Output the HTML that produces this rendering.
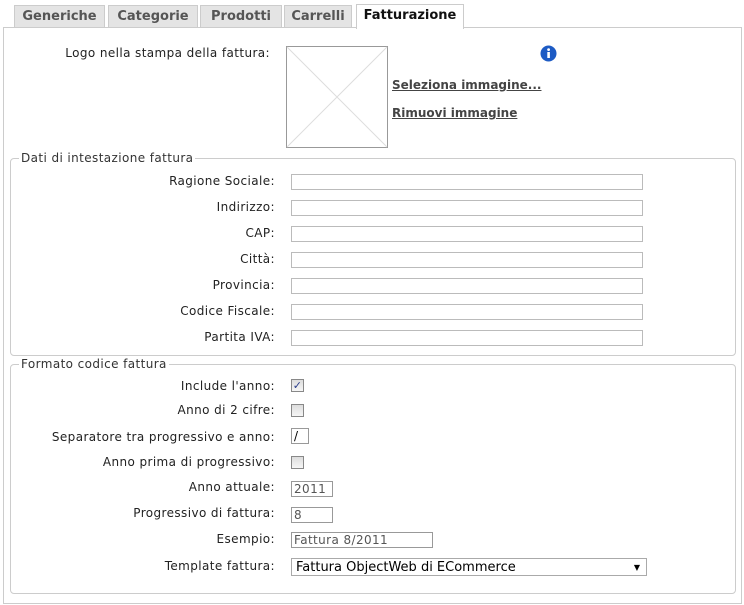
<!DOCTYPE html><html><head><style>
body{margin:0;width:744px;height:605px;background:#fff;font-family:"DejaVu Sans","Liberation Sans",sans-serif;font-size:12px;letter-spacing:0.4px;color:#222;position:relative;overflow:hidden}
.a{position:absolute}
.tab{position:absolute;top:5px;height:21px;background:#e4e4e4;border:1px solid #ccc;border-bottom:none;font-weight:bold;color:#555;font-size:13px;letter-spacing:0;text-align:center;line-height:22px}
.lbl{position:absolute;right:469px;white-space:nowrap}
.in{position:absolute;left:291px;width:350px;height:14px;border:1px solid #bbb;background:#fff}
.fs{position:absolute;border:1px solid #ccc;border-radius:4px;left:10px;width:724px}
.lg{position:absolute;left:8px;top:-8px;background:#fff;padding:0 2px;color:#333}
.cb{position:absolute;left:291px;width:11px;height:11px;border:1px solid #888;background:linear-gradient(#ddd,#f6f6f6)}
.t{position:absolute;left:291px;border:1px solid #999;height:14px;line-height:14px;padding-left:2px;color:#555;font-size:12px}
</style></head><body>
<div class="a" style="left:3px;top:27px;width:737px;height:575px;border:1px solid #ccc"></div>
<div class="tab" style="left:14px;width:89px">Generiche</div>
<div class="tab" style="left:108px;width:88px">Categorie</div>
<div class="tab" style="left:200px;width:80px">Prodotti</div>
<div class="tab" style="left:284px;width:66px">Carrelli</div>
<div class="tab" style="left:356px;width:106px;top:4px;height:24px;background:#fff;color:#111">Fatturazione</div>
<div class="lbl" style="top:46px;right:474px">Logo nella stampa della fattura:</div>
<svg class="a" style="left:286px;top:46px" width="102" height="102"><rect x=".5" y=".5" width="101" height="101" fill="#fff" stroke="#999"/><path d="M1 1L101 101M101 1L1 101" stroke="#ddd"/></svg>
<svg class="a" style="left:540px;top:45px" width="17" height="17"><circle cx="8.5" cy="8.5" r="8" fill="#1d5bc4"/><rect x="7.3" y="7" width="2.6" height="6" fill="#fff"/><circle cx="8.6" cy="4.6" r="1.4" fill="#fff"/></svg>
<div class="a" style="left:392px;top:78px;font-weight:bold;text-decoration:underline;color:#444;letter-spacing:0">Seleziona immagine...</div>
<div class="a" style="left:392px;top:106px;font-weight:bold;text-decoration:underline;color:#444;letter-spacing:0">Rimuovi immagine</div>
<div class="fs" style="top:158px;height:196px"><span class="lg">Dati di intestazione fattura</span></div>
<div class="lbl" style="top:174px">Ragione Sociale:</div><div class="in" style="top:174px"></div>
<div class="lbl" style="top:200px">Indirizzo:</div><div class="in" style="top:200px"></div>
<div class="lbl" style="top:226px">CAP:</div><div class="in" style="top:226px"></div>
<div class="lbl" style="top:252px">Città:</div><div class="in" style="top:252px"></div>
<div class="lbl" style="top:278px">Provincia:</div><div class="in" style="top:278px"></div>
<div class="lbl" style="top:304px">Codice Fiscale:</div><div class="in" style="top:304px"></div>
<div class="lbl" style="top:330px">Partita IVA:</div><div class="in" style="top:330px"></div>
<div class="fs" style="top:364px;height:228px"><span class="lg">Formato codice fattura</span></div>
<div class="lbl" style="top:379px">Include l'anno:</div><div class="cb" style="top:379px;color:#2a3c8a;font-size:11px;line-height:11px;text-align:center">✓</div>
<div class="lbl" style="top:403px">Anno di 2 cifre:</div><div class="cb" style="top:404px"></div>
<div class="lbl" style="top:430px">Separatore tra progressivo e anno:</div><div class="t" style="top:428px;width:14px;color:#000">/</div>
<div class="lbl" style="top:455px">Anno prima di progressivo:</div><div class="cb" style="top:456px"></div>
<div class="lbl" style="top:480px">Anno attuale:</div><div class="t" style="top:481px;width:38px">2011</div>
<div class="lbl" style="top:506px">Progressivo di fattura:</div><div class="t" style="top:507px;width:38px">8</div>
<div class="lbl" style="top:532px">Esempio:</div><div class="t" style="top:532px;width:138px">Fattura 8/2011</div>
<div class="lbl" style="top:559px">Template fattura:</div><div class="t" style="top:558px;width:350px;height:16px;line-height:17px;color:#000;border-color:#aaa;padding-left:4px;font-size:13px;letter-spacing:0">Fattura ObjectWeb di ECommerce<span style="position:absolute;right:6px;font-size:8px">▼</span></div>
</body></html>
